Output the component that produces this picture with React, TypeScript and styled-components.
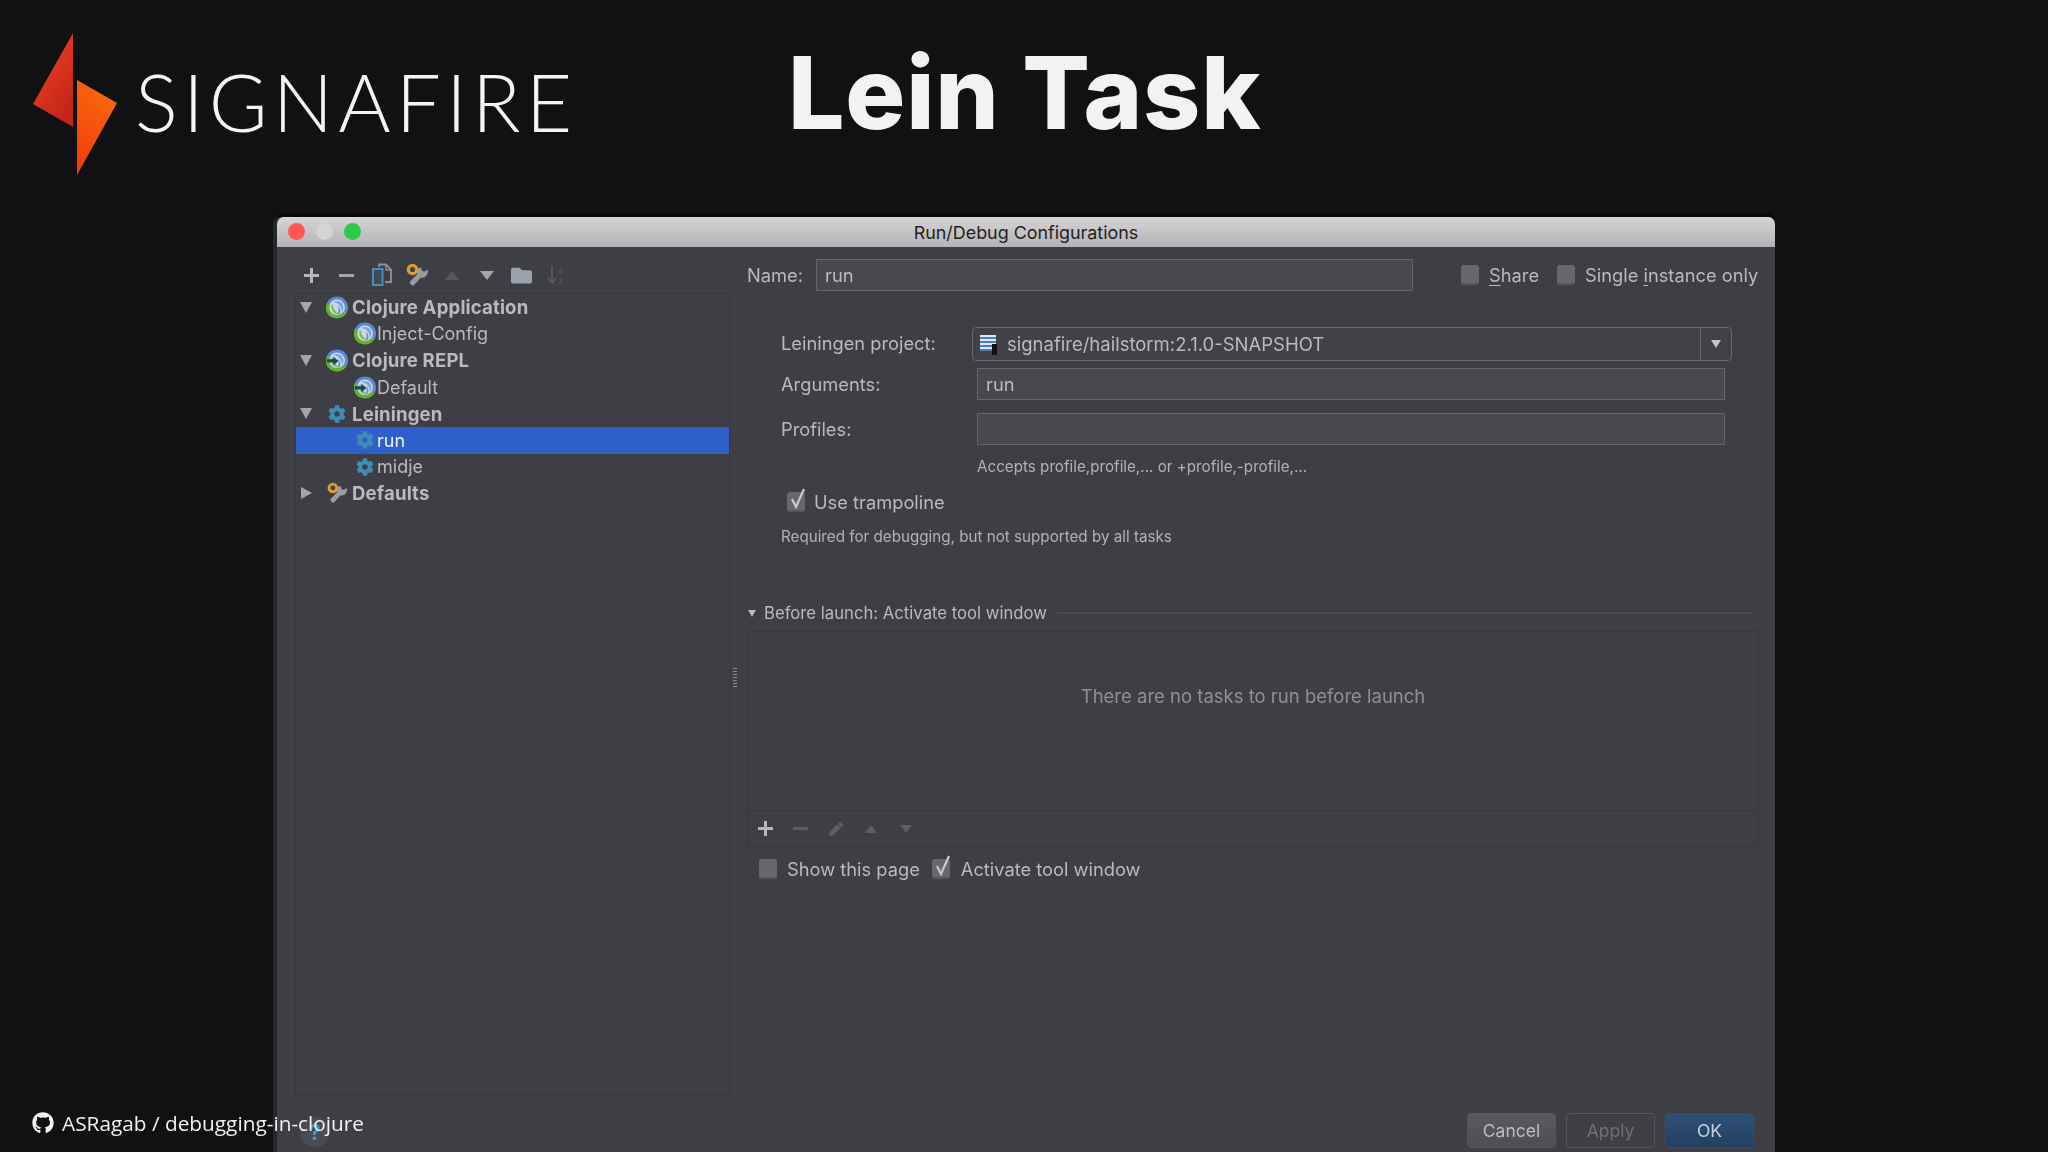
import React from 'react';
import styled, { createGlobalStyle } from 'styled-components';
import { FaCog, FaFolder, FaGithub, FaPen } from 'react-icons/fa';

const GlobalStyle = createGlobalStyle`
  html, body {
    margin: 0;
    padding: 0;
    background: #111113;
  }
  * {
    box-sizing: border-box;
  }
`;

const UI_FONT = `Inter, "Liberation Sans", sans-serif`;

const ClojureIcon = ({ repl }: { repl?: boolean }) => (
  <svg width="23" height="23" viewBox="0 0 24 24" fill="none">
    <circle cx="12" cy="12" r="11.500" fill="#c9d9e6" />
    <path d="M8 6c3.500-2 7.500-1 9.500 1.500 2 3 2 6.500 0 9.500 0-5-3.500-10.500-9.500-11z" fill="#7fa2e4" />
    <path d="M12.500 9.500c2.500 2 4 5 3 8.500-1 1-2 1.300-3 1.500 2-3 2-7 0-10z" fill="#5d88d8" />
    <path d="M6 9c-1 4 1 8.500 5 10 1 .4 2.500.4 3.500.2-4-2-6.500-5.500-7-10.200-.5-.4-1-.4-1.500 0z" fill="#7cbd49" />
    <path d="M2.500 8C4 4 8 1.700 12 1.700c6 0 10.300 4.500 10.300 10.300 0 2-.5 4-1.500 5.500" stroke="#5b87d8" strokeWidth="3.400" />
    <path d="M2.500 8C1 13 2.500 18 6.500 20.700c4.500 2.500 10.500 1.500 14.300-3.200" stroke="#68b034" strokeWidth="3.800" />
    {repl && <path d="M1 10.500h7V7.500l5.500 5-5.500 5v-3.200H1z" fill="#1f4560" />}
  </svg>
);

const WrenchIcon = () => (
  <svg width="24" height="24" viewBox="0 0 24 24">
    <path d="M23 6.500l-4 2.200-2.500-1.400V5C14 4 11.800 6 12 9c0 1 .2 1.500.5 2L5.500 18c-1.500 1.500-.5 2.500.5 3.500 1 1 2 1.500 3 .5l7-7.500c3 1 7.500-1.500 7-8.500z" fill="#9a9c9f" />
    <circle cx="7.500" cy="6.500" r="4.200" fill="#4a4336" stroke="#dd9a35" strokeWidth="3.200" />
  </svg>
);

const CopyIcon = () => (
  <svg width="22" height="24" viewBox="0 0 22 24" fill="none">
    <path d="M8 4V1.500h7l5 5V19h-6" stroke="#8f9397" strokeWidth="1.800" />
    <path d="M15 2v5h5" stroke="#8f9397" strokeWidth="1.400" />
    <path d="M2 6h9.500v16H2z" stroke="#4a8db5" strokeWidth="2" fill="#3f4a52" />
  </svg>
);

const SortIcon = () => (
  <svg width="22" height="22" viewBox="0 0 22 22" fill="none">
    <path d="M6 2v17M2 14l4 5 4-5" stroke="#565a5e" strokeWidth="1.800" />
    <text x="12" y="10" fontSize="9" fill="#565a5e" fontFamily="Inter, sans-serif">a</text>
    <text x="12" y="20" fontSize="9" fill="#565a5e" fontFamily="Inter, sans-serif">z</text>
  </svg>
);

const TickMark = () => (
  <Tick width="20" height="24" viewBox="0 0 20 24" fill="none">
    <path d="M4 12l4 8 8-18" stroke="#c9cacc" strokeWidth="2.200" />
  </Tick>
);

const Page = styled.div`
  position: relative;
  width: 2048px;
  height: 1152px;
  overflow: hidden;
  background: #111113;
  display: flex;
  flex-direction: column;
`;

const Header = styled.header`
  height: 217px;
  flex: none;
  display: flex;
  align-items: flex-start;
`;

const Logo = styled.div`
  width: 788px;
  display: flex;
  align-items: flex-start;
  padding: 33px 0 0 33px;
`;

const Wordmark = styled.span`
  margin: 38px 0 0 18px;
  font: 300 80px/60px Lato, "Open Sans", sans-serif;
  letter-spacing: 5.1px;
  color: #f4f3f5;
`;

const Title = styled.h1`
  margin: 38px 0 0;
  font: 800 100px/110px Inter, "Liberation Sans", sans-serif;
  letter-spacing: 0.8px;
  color: #f2f1f4;
`;

const Window = styled.section`
  position: relative;
  flex: 1;
  margin-left: 277px;
  width: 1498px;
  display: flex;
  flex-direction: column;
  background: #3d3f44;
  border-radius: 7px 7px 0 0;
  box-shadow: -4px 0 0 #26272a, 0 -4px 0 #0a0a0d;
  font-family: ${UI_FONT};
  filter: blur(0.4px);
`;

const TitleBar = styled.div`
  height: 30px;
  flex: none;
  display: flex;
  align-items: center;
  position: relative;
  justify-content: center;
  background: linear-gradient(#d6d4d6, #b4b2b4);
  border-radius: 7px 7px 0 0;
  font-size: 17.9px;
  color: #1f1f21;
`;

const TrafficLights = styled.div`
  position: absolute;
  left: 11px;
  top: 6px;
  display: flex;
  gap: 11px;
`;

const Light = styled.span<{ $color: string }>`
  width: 17px;
  height: 17px;
  border-radius: 50%;
  background: ${(p) => p.$color};
`;

const DialogBody = styled.div`
  flex: 1;
  display: flex;
  min-height: 0;
`;

const LeftColumn = styled.div`
  width: 453px;
  flex: none;
  padding: 0 0 57px 18px;
  display: flex;
  flex-direction: column;
`;

const Toolbar = styled.div<{ $height: number }>`
  height: ${(p) => p.$height}px;
  flex: none;
  display: flex;
  align-items: center;
`;

const TreeToolbar = styled(Toolbar)`
  padding-top: 10px;
  margin-left: -1px;
`;

const ToolButton = styled.span<{ $color?: string }>`
  width: 35px;
  flex: none;
  display: flex;
  justify-content: center;
  align-items: center;
  color: ${(p) => p.$color || '#a9abae'};
`;

const Plus = styled.span`
  width: 15px;
  height: 15px;
  background:
    linear-gradient(#b5b7b9, #b5b7b9) center / 100% 3px no-repeat,
    linear-gradient(#b5b7b9, #b5b7b9) center / 3px 100% no-repeat;
`;

const Minus = styled.span<{ $color?: string }>`
  width: 15px;
  height: 3px;
  background: ${(p) => p.$color || '#a4a6a9'};
`;

const Triangle = styled.span<{ $dir: 'up' | 'down' | 'right'; $half: number; $long: number; $color: string }>`
  width: 0;
  height: 0;
  border-style: solid;
  border-color: transparent;
  ${(p) =>
    p.$dir === 'up'
      ? `border-width: 0 ${p.$half}px ${p.$long}px; border-bottom-color: ${p.$color};`
      : p.$dir === 'down'
      ? `border-width: ${p.$long}px ${p.$half}px 0; border-top-color: ${p.$color};`
      : `border-width: ${p.$half}px 0 ${p.$half}px ${p.$long}px; border-left-color: ${p.$color};`}
`;

const Tree = styled.div`
  flex: 1;
  border: 1px solid #36383c;
`;

const TreeRow = styled.div<{ $child?: boolean; $selected?: boolean }>`
  height: 26.6px;
  display: flex;
  align-items: center;
  padding-left: ${(p) => (p.$child ? 58 : 0)}px;
  background: ${(p) => (p.$selected ? '#2f5fc8' : 'transparent')};
  color: ${(p) => (p.$selected ? '#eef2fb' : '#b9babd')};
  font-size: ${(p) => (p.$child ? 18 : 18.6)}px;
  font-weight: ${(p) => (p.$child ? 400 : 700)};
  letter-spacing: ${(p) => (p.$child ? 0 : 0.15)}px;
`;

const Arrow = styled.span`
  width: 20px;
  margin-right: 10px;
  flex: none;
  display: flex;
  justify-content: center;
`;

const NodeIcon = styled.span<{ $child?: boolean }>`
  width: 22px;
  margin-right: ${(p) => (p.$child ? 1 : 4)}px;
  flex: none;
  display: flex;
  justify-content: center;
  align-items: center;
  color: #3f8db5;
`;

const RightColumn = styled.div`
  flex: 1;
  min-width: 0;
  position: relative;
  padding: 12px 16px 0 17px;
  display: flex;
  flex-direction: column;
  color: #b9babd;
  font-size: 18.3px;
`;

const Splitter = styled.span`
  position: absolute;
  left: 3px;
  top: 421px;
  width: 4px;
  height: 19px;
  background: repeating-linear-gradient(#8a8c90 0 1px, transparent 1px 3px);
`;

const NameRow = styled.div`
  display: flex;
  align-items: center;
  height: 32px;
`;

const NameLabel = styled.label`
  width: 69px;
  flex: none;
`;

const TextInput = styled.div<{ $width?: number }>`
  height: 32px;
  width: ${(p) => (p.$width ? `${p.$width}px` : 'auto')};
  flex: none;
  display: flex;
  align-items: center;
  padding-left: 8px;
  background: #47494d;
  border: 1px solid #63666a;
  color: #bbbcbe;
`;

const Check = styled.label<{ $gap: number; $left?: number }>`
  display: flex;
  align-items: center;
  flex: none;
  white-space: nowrap;
  gap: ${(p) => p.$gap}px;
  margin-left: ${(p) => p.$left || 0}px;
`;

const Mnemonic = styled.span`
  text-decoration: underline;
  text-underline-offset: 3px;
`;

const Box = styled.span`
  position: relative;
  width: 18px;
  height: 20px;
  flex: none;
  background: #66686c;
  border-radius: 3px;
  border-bottom: 2px solid #55575a;
`;

const Tick = styled.svg`
  position: absolute;
  left: 1px;
  top: -5px;
`;

const Form = styled.div`
  padding-left: 34px;
  margin-top: 36px;
  padding-right: 34px;
  display: grid;
  grid-template-columns: 196px 1fr;
  align-items: center;
`;

const ProjectLabel = styled.span`
  margin-top: -2px;
`;

const ComboBox = styled.div`
  height: 34px;
  margin: 0 -7px 0 -5px;
  display: flex;
  align-items: center;
  border: 1px solid #63666a;
  border-radius: 4px;
  background: #404246;
`;

const ComboValue = styled.div`
  flex: 1;
  display: flex;
  align-items: center;
  gap: 11px;
  padding-left: 7px;
  font-size: 18.5px;
`;

const ComboArrow = styled.div`
  width: 31px;
  height: 100%;
  border-left: 1px solid #63666a;
  display: flex;
  justify-content: center;
  align-items: center;
`;

const ProjectIcon = styled.span`
  position: relative;
  width: 16px;
  height: 16px;
  margin-top: -3px;
  background: repeating-linear-gradient(#dfe7f2 0 2px, #4a7cc0 2px 4px);
  &::after {
    content: '';
    position: absolute;
    right: -1px;
    bottom: -4px;
    width: 5px;
    height: 11px;
    background: #111;
  }
`;

const Hint = styled.div`
  font-size: 15.2px;
  color: #b1b2b5;
`;

const HintField = styled(Hint)`
  grid-column: 2;
  margin-top: 12px;
  height: 20px;
  line-height: 20px;
`;

const Spacer = styled.div<{ $size: number }>`
  grid-column: 1 / -1;
  height: ${(p) => p.$size}px;
`;

const TrampolineRow = styled.div`
  grid-column: 1 / -1;
  margin: 14px 0 0 6px;
`;

const RequiredHint = styled(Hint)`
  grid-column: 1 / -1;
  margin-top: 14px;
  line-height: 20px;
`;

const SectionHeader = styled.div`
  display: flex;
  align-items: center;
  height: 20px;
  margin: 56px 0 8px;
  font-size: 16.7px;
  padding-left: 1px;
`;

const SectionTitle = styled.span`
  margin: 0 10px 0 8px;
`;

const SectionLine = styled.span`
  flex: 1;
  height: 2px;
  margin-right: 6px;
  background: #4a4c50;
`;

const TaskBox = styled.div`
  height: 216px;
  flex: none;
  border: 1px solid #36383c;
  display: flex;
  flex-direction: column;
`;

const TaskMessage = styled.div`
  flex: 1;
  display: flex;
  align-items: center;
  justify-content: center;
  padding-bottom: 50px;
  color: #8f9094;
  font-size: 18.5px;
`;

const TaskToolbar = styled(Toolbar)`
  border-top: 1px solid #36383c;
`;

const OptionRow = styled.div`
  display: flex;
  align-items: center;
  height: 22px;
  margin: 11px 0 0 12px;
`;

const ButtonRow = styled.div`
  position: absolute;
  right: 21px;
  bottom: 4px;
  display: flex;
  gap: 10px;
`;

const DialogButton = styled.button<{ $variant?: 'primary' | 'disabled' }>`
  width: 89px;
  height: 35px;
  border-radius: 4px;
  font: 400 17.5px ${UI_FONT};
  border: 1px solid ${(p) => (p.$variant === 'primary' ? '#2f4f73' : '#55575b')};
  background: ${(p) =>
    p.$variant === 'primary'
      ? 'linear-gradient(#2d5079, #243f60)'
      : p.$variant === 'disabled'
      ? '#3e4044'
      : 'linear-gradient(#595b60, #4c4e52)'};
  color: ${(p) => (p.$variant === 'primary' ? '#c3d2e0' : p.$variant === 'disabled' ? '#6e7074' : '#bcbdbf')};
`;

const HelpBadge = styled.span`
  position: absolute;
  left: 23px;
  bottom: 5px;
  width: 30px;
  height: 30px;
  border-radius: 50%;
  background: #4a4c51;
  display: flex;
  align-items: center;
  justify-content: center;
  color: #3d9ad8;
  font: 700 21px Inter, sans-serif;
`;

const Credit = styled.div`
  position: absolute;
  left: 32px;
  bottom: 15px;
  display: flex;
  align-items: center;
  gap: 8px;
  color: #f1f1f2;
  font: 400 20.8px "Open Sans", sans-serif;
`;

const App = () => {
  const treeRows = [
    { label: 'Clojure Application', icon: <ClojureIcon /> },
    { label: 'Inject-Config', icon: <ClojureIcon />, child: true },
    { label: 'Clojure REPL', icon: <ClojureIcon repl /> },
    { label: 'Default', icon: <ClojureIcon repl />, child: true },
    { label: 'Leiningen', icon: <FaCog size={18} /> },
    { label: 'run', icon: <FaCog size={18} />, child: true, selected: true },
    { label: 'midje', icon: <FaCog size={18} />, child: true },
    { label: 'Defaults', icon: <WrenchIcon />, collapsed: true },
  ];

  return (
    <>
      <GlobalStyle />
      <Page>
        <Header>
          <Logo>
            <svg width="84" height="142" viewBox="33 33 84 142">
              <defs>
                <linearGradient id="flameLeft" x1="0" y1="0" x2="0.6" y2="1">
                  <stop offset="0" stopColor="#f0491f" />
                  <stop offset="1" stopColor="#c4241a" />
                </linearGradient>
                <linearGradient id="flameRight" x1="0.6" y1="0" x2="0.2" y2="1">
                  <stop offset="0" stopColor="#f96a0c" />
                  <stop offset="1" stopColor="#f23c0a" />
                </linearGradient>
              </defs>
              <polygon points="73,33 33,104 73,127" fill="url(#flameLeft)" />
              <polygon points="77,80 117,103 77,175" fill="url(#flameRight)" />
            </svg>
            <Wordmark>SIGNAFIRE</Wordmark>
          </Logo>
          <Title>Lein Task</Title>
        </Header>

        <Window>
          <TitleBar>
            <TrafficLights>
              <Light $color="#fc5753" />
              <Light $color="#d5d3d4" />
              <Light $color="#2fc94a" />
            </TrafficLights>
            Run/Debug Configurations
          </TitleBar>
          <DialogBody>
            <LeftColumn>
              <TreeToolbar $height={46}>
                <ToolButton><Plus /></ToolButton>
                <ToolButton><Minus /></ToolButton>
                <ToolButton><CopyIcon /></ToolButton>
                <ToolButton><WrenchIcon /></ToolButton>
                <ToolButton><Triangle $dir="up" $half={7} $long={9} $color="#55585b" /></ToolButton>
                <ToolButton><Triangle $dir="down" $half={7} $long={9} $color="#a4a6a9" /></ToolButton>
                <ToolButton $color="#9aa3ad"><FaFolder size={21} /></ToolButton>
                <ToolButton><SortIcon /></ToolButton>
              </TreeToolbar>
              <Tree>
                {treeRows.map((row) => (
                  <TreeRow key={row.label} $child={row.child} $selected={row.selected}>
                    {!row.child && (
                      <Arrow>
                        {row.collapsed ? (
                          <Triangle $dir="right" $half={6} $long={11} $color="#a4a6a9" />
                        ) : (
                          <Triangle $dir="down" $half={6} $long={11} $color="#a4a6a9" />
                        )}
                      </Arrow>
                    )}
                    <NodeIcon $child={row.child}>{row.icon}</NodeIcon>
                    {row.label}
                  </TreeRow>
                ))}
              </Tree>
            </LeftColumn>

            <RightColumn>
              <Splitter />
              <NameRow>
                <NameLabel>Name:</NameLabel>
                <TextInput $width={597}>run</TextInput>
                <Check $gap={10} $left={48}>
                  <Box />
                  <span><Mnemonic>S</Mnemonic>hare</span>
                </Check>
                <Check $gap={10} $left={18}>
                  <Box />
                  <span>Single <Mnemonic>i</Mnemonic>nstance only</span>
                </Check>
              </NameRow>

              <Form>
                <ProjectLabel>Leiningen project:</ProjectLabel>
                <ComboBox>
                  <ComboValue>
                    <ProjectIcon />
                    signafire/hailstorm:2.1.0-SNAPSHOT
                  </ComboValue>
                  <ComboArrow>
                    <Triangle $dir="down" $half={5} $long={8} $color="#c4c5c7" />
                  </ComboArrow>
                </ComboBox>
                <Spacer $size={7} />
                <span>Arguments:</span>
                <TextInput>run</TextInput>
                <Spacer $size={13} />
                <span>Profiles:</span>
                <TextInput />
                <HintField>Accepts profile,profile,... or +profile,-profile,...</HintField>
                <TrampolineRow>
                  <Check $gap={9}>
                    <Box><TickMark /></Box>
                    Use trampoline
                  </Check>
                </TrampolineRow>
                <RequiredHint>Required for debugging, but not supported by all tasks</RequiredHint>
              </Form>

              <SectionHeader>
                <Triangle $dir="down" $half={4} $long={7} $color="#b9babd" />
                <SectionTitle>Before launch: Activate tool window</SectionTitle>
                <SectionLine />
              </SectionHeader>
              <TaskBox>
                <TaskMessage>There are no tasks to run before launch</TaskMessage>
                <TaskToolbar $height={36}>
                  <ToolButton><Plus /></ToolButton>
                  <ToolButton><Minus $color="#5c5e62" /></ToolButton>
                  <ToolButton $color="#5c5e62"><FaPen size={14} /></ToolButton>
                  <ToolButton><Triangle $dir="up" $half={6} $long={8} $color="#5c5e62" /></ToolButton>
                  <ToolButton><Triangle $dir="down" $half={6} $long={8} $color="#5c5e62" /></ToolButton>
                </TaskToolbar>
              </TaskBox>
              <OptionRow>
                <Check $gap={10}>
                  <Box />
                  Show this page
                </Check>
                <Check $gap={11} $left={12}>
                  <Box><TickMark /></Box>
                  Activate tool window
                </Check>
              </OptionRow>
              <ButtonRow>
                <DialogButton>Cancel</DialogButton>
                <DialogButton $variant="disabled">Apply</DialogButton>
                <DialogButton $variant="primary">OK</DialogButton>
              </ButtonRow>
            </RightColumn>
          </DialogBody>
          <HelpBadge>?</HelpBadge>
        </Window>

        <Credit>
          <FaGithub size={22} />
          ASRagab / debugging-in-clojure
        </Credit>
      </Page>
    </>
  );
};

export default App;
